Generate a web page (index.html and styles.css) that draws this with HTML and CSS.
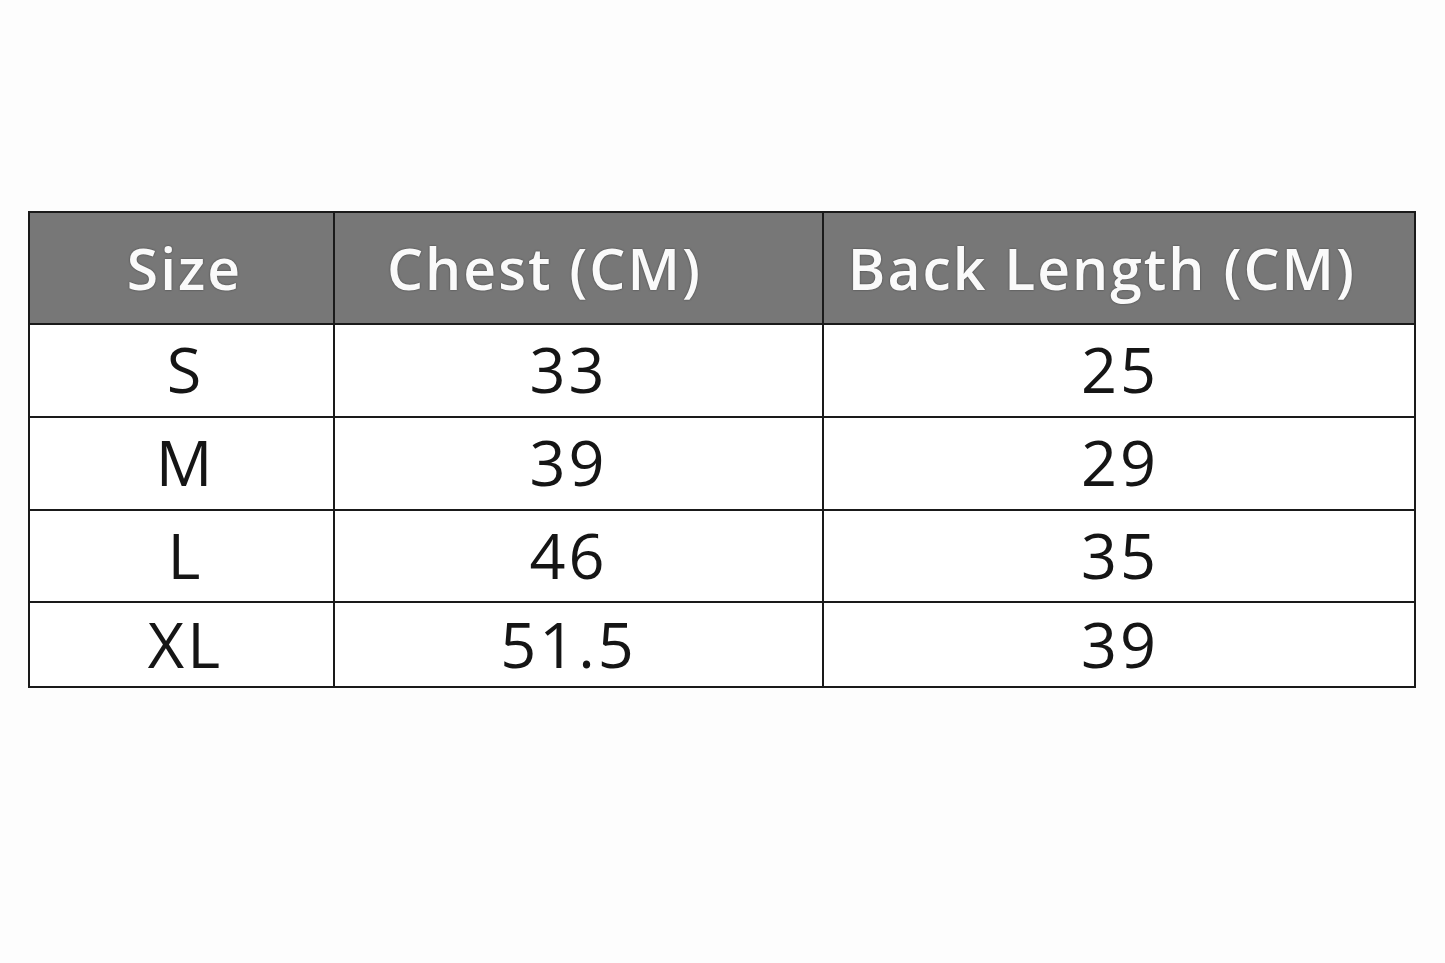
FILE: index.html
```html
<!DOCTYPE html>
<html>
<head>
<meta charset="utf-8">
<link rel="stylesheet" href="styles.css">
</head>
<body>
<div class="page">
  <table class="sizes">
    <colgroup>
      <col class="c1"><col class="c2"><col class="c3">
    </colgroup>
    <thead>
      <tr class="head"><th class="k1">Size</th><th class="k2">Chest (CM)</th><th class="k3">Back Length (CM)</th></tr>
    </thead>
    <tbody>
      <tr class="r1"><td class="k1">S</td><td class="k2">33</td><td class="k3">25</td></tr>
      <tr class="r2"><td class="k1">M</td><td class="k2">39</td><td class="k3">29</td></tr>
      <tr class="r3"><td class="k1">L</td><td class="k2">46</td><td class="k3">35</td></tr>
      <tr class="r4"><td class="k1">XL</td><td class="k2">51.5</td><td class="k3">39</td></tr>
    </tbody>
  </table>
</div>
</body>
</html>
```
FILE: styles.css
```css
html, body {
  margin: 0;
  padding: 0;
  background: #fdfdfd;
}
.page {
  width: 1445px;
  height: 963px;
  padding: 211px 0 0 28px;
  box-sizing: border-box;
}
.sizes {
  border-collapse: collapse;
  table-layout: fixed;
  width: 1386px;
  border: 2px solid #1a1a1a;
  font-family: "Open Sans", "Liberation Sans", sans-serif;
}
.c1 { width: 305px; }
.c2 { width: 489px; }
.c3 { width: 592px; }
.sizes th, .sizes td {
  border: 2px solid #1a1a1a;
  text-align: center;
  padding: 0;
  line-height: 1;
}
.sizes th {
  background: #777777;
  color: #fafafa;
  font-weight: 600;
  font-size: 57px;
  height: 110px;
  letter-spacing: 2px;
  text-shadow: 0 0 2px #3a3a3a;
  vertical-align: middle;
}
.sizes th.k1 { padding-left: 6px; }
.sizes th.k2 { padding-right: 68px; }
.sizes th.k3 { padding-right: 34px; }
.sizes td {
  background: #ffffff;
  color: #151515;
  font-weight: 400;
  font-size: 63px;
  letter-spacing: 3px;
}
.sizes td.k1 { padding-left: 8px; }
.sizes td.k2 { padding-right: 20px; }
.sizes td.k3 { padding-left: 2px; }
.r1 td { height: 87px; padding-bottom: 4px; }
.r2 td { height: 87px; padding-bottom: 4px; }
.r3 td { height: 86px; padding-bottom: 4px; }
.r4 td { height: 81px; padding-bottom: 2px; }
```
